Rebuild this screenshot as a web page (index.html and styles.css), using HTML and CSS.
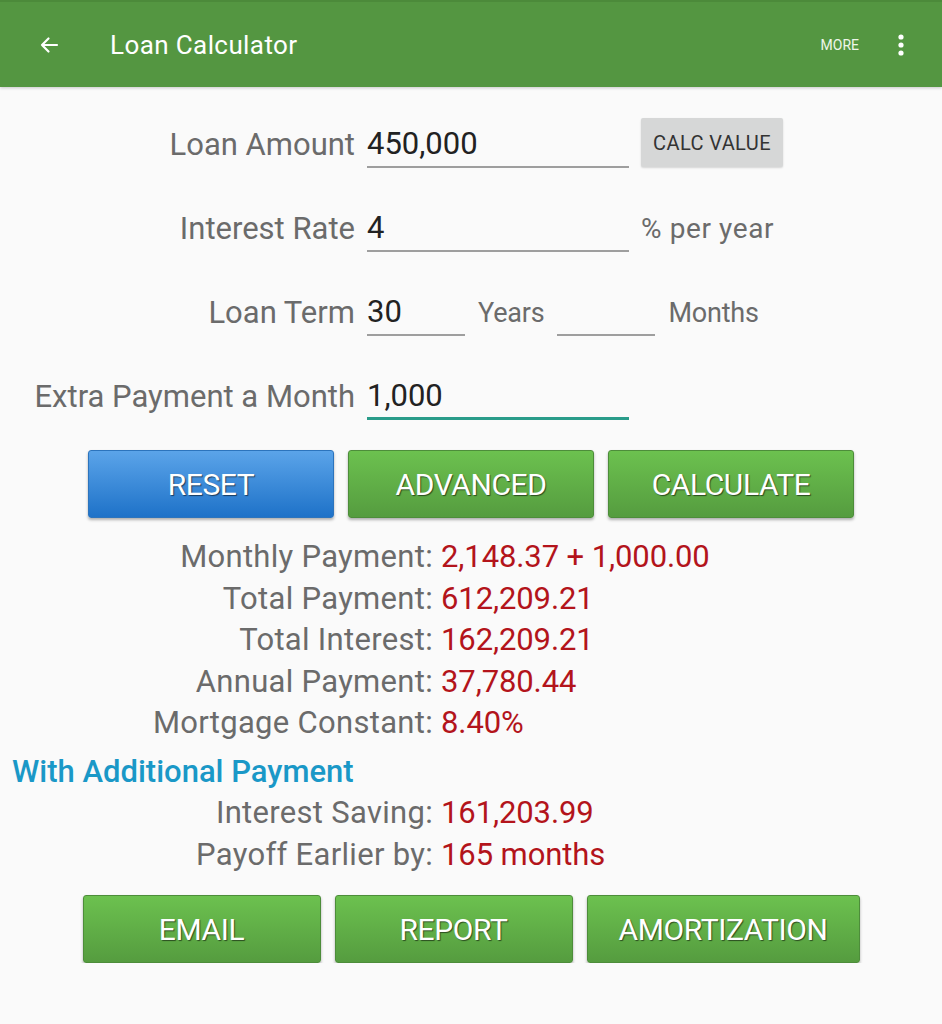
FILE: index.html
```html
<!DOCTYPE html>
<html lang="en">
<head>
<meta charset="utf-8">
<title>Loan Calculator</title>
<link rel="stylesheet" href="styles.css">
</head>
<body>
<header class="appbar">
  <svg class="back" width="24" height="24" viewBox="0 0 24 24"><path d="M20 12H5M11.5 5.5L5 12l6.5 6.5" fill="none" stroke="#fff" stroke-width="2.2" stroke-linecap="round" stroke-linejoin="round"/></svg>
  <h1 class="title">Loan Calculator</h1>
  <span class="more">MORE</span>
  <svg class="dots" width="8" height="22" viewBox="0 0 8 22"><circle cx="4" cy="3" r="2.6" fill="#fff"/><circle cx="4" cy="11" r="2.6" fill="#fff"/><circle cx="4" cy="19" r="2.6" fill="#fff"/></svg>
</header>

<main class="content">
  <section class="form">
    <div class="row">
      <label class="lbl">Loan Amount</label>
      <div class="field wide">450,000</div>
      <button class="calc">CALC VALUE</button>
    </div>
    <div class="row">
      <label class="lbl">Interest Rate</label>
      <div class="field wide">4</div>
      <span class="unit">% per year</span>
    </div>
    <div class="row">
      <label class="lbl">Loan Term</label>
      <div class="term">
        <div class="field short">30</div>
        <span class="unit">Years</span>
        <div class="field short"></div>
        <span class="unit">Months</span>
      </div>
    </div>
    <div class="row">
      <label class="lbl">Extra Payment a Month</label>
      <div class="field wide focus">1,000</div>
    </div>
  </section>

  <div class="actions">
    <button class="btn blue">RESET</button>
    <button class="btn green">ADVANCED</button>
    <button class="btn green">CALCULATE</button>
  </div>

  <section class="results">
    <div class="res"><span class="rl">Monthly Payment:</span><span class="rv">2,148.37 + 1,000.00</span></div>
    <div class="res"><span class="rl">Total Payment:</span><span class="rv">612,209.21</span></div>
    <div class="res"><span class="rl">Total Interest:</span><span class="rv">162,209.21</span></div>
    <div class="res"><span class="rl">Annual Payment:</span><span class="rv">37,780.44</span></div>
    <div class="res"><span class="rl">Mortgage Constant:</span><span class="rv">8.40%</span></div>
    <h2 class="sub">With Additional Payment</h2>
    <div class="res"><span class="rl">Interest Saving:</span><span class="rv">161,203.99</span></div>
    <div class="res"><span class="rl">Payoff Earlier by:</span><span class="rv">165 months</span></div>
  </section>

  <div class="actions bottom">
    <button class="btn green mid">EMAIL</button>
    <button class="btn green mid">REPORT</button>
    <button class="btn green big">AMORTIZATION</button>
  </div>
</main>
</body>
</html>
```
FILE: styles.css
```css
* { box-sizing: border-box; }
html, body {
  margin: 0;
  padding: 0;
  background: #fafafa;
  font-family: Roboto, "Noto Sans", sans-serif;
}
.appbar {
  height: 87px;
  background: #549641;
  border-top: 2px solid #4c8a3a;
  display: flex;
  align-items: center;
  padding: 0 0 0 37px;
  box-shadow: 0 1px 3px rgba(0,0,0,0.2);
  color: #fff;
}
.back { margin-right: 49px; }
.title {
  margin: 0;
  font-size: 26px;
  font-weight: 400;
  letter-spacing: 0.4px;
  flex: 1;
}
.more {
  font-size: 14px;
  color: #eef6ea;
  margin-right: 38px;
}
.dots { margin-right: 37px; }

.content { display: flex; flex-direction: column; }

.form {
  padding-top: 35px;
  display: flex;
  flex-direction: column;
  gap: 38px;
}
.row {
  display: grid;
  grid-template-columns: 355px 262px auto;
  column-gap: 12px;
  align-items: end;
  height: 46px;
}
.lbl {
  text-align: right;
  font-size: 31px;
  color: #6b6b6b;
  line-height: 46px;
  height: 46px;
  letter-spacing: 0;
}
.field {
  height: 46px;
  border-bottom: 2px solid #9e9e9e;
  font-size: 31px;
  color: #222;
  line-height: 44px;
  padding-left: 0;
}
.field.focus { border-bottom: 3px solid #2a9c8a; }
.term {
  display: flex;
  align-items: flex-end;
  gap: 13px;
  grid-column: 2 / 4;
}
.field.short { width: 98px; }
.unit {
  font-size: 27px;
  color: #6b6b6b;
  line-height: 46px;
  height: 46px;
  letter-spacing: -0.2px;
}
.row > .unit { font-size: 28px; letter-spacing: 0.6px; }
.calc {
  justify-self: start;
  align-self: start;
  margin-top: -4px;
  width: 142px;
  height: 49px;
  background: #d6d7d7;
  border: none;
  border-radius: 2px;
  box-shadow: 0 1px 2px rgba(0,0,0,0.15);
  font-family: inherit;
  font-size: 20px;
  color: #333;
  letter-spacing: 0.4px;
  padding: 0;
}

.actions {
  display: flex;
  justify-content: center;
  gap: 14px;
  margin-top: 30px;
}
.btn {
  width: 246px;
  height: 68px;
  border-radius: 3px;
  font-family: inherit;
  font-size: 30px;
  color: #fff;
  letter-spacing: -0.4px;
  text-shadow: 1px 1px 1px rgba(0,0,0,0.55);
  padding: 0;
  box-shadow: 0 2px 3px rgba(0,0,0,0.3);
}
.blue {
  background: linear-gradient(#5ba4e9, #1e72c8);
  border: 1px solid #2c74bd;
}
.green {
  background: linear-gradient(#6cc14f, #559c3f);
  border: 1px solid #4d8d3a;
}
.bottom { margin-top: 20px; }
.btn.mid { width: 238px; }
.btn.big { width: 273px; }

.results {
  margin-top: 18px;
  display: flex;
  flex-direction: column;
}
.res {
  display: grid;
  grid-template-columns: 433px auto;
  column-gap: 8px;
  font-size: 31px;
  line-height: 41.5px;
  height: 41.5px;
}
.rl { text-align: right; color: #6b6b6b; letter-spacing: 0.3px; }
.rv { color: #b3141b; letter-spacing: -0.1px; }
.sub {
  margin: 7px 0 0 12px;
  font-size: 31px;
  font-weight: 500;
  line-height: 41.5px;
  color: #1a98c7;
  letter-spacing: 0;
}
```
